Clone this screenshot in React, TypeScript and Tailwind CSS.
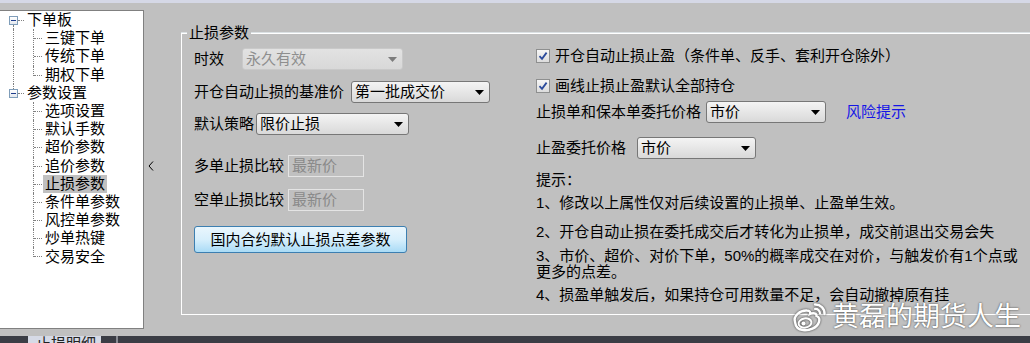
import React from 'react';

type TreeNode = { label: string; level: 0 | 1; selected?: boolean };

const nodes: TreeNode[] = [
  { label: '下单板', level: 0 },
  { label: '三键下单', level: 1 },
  { label: '传统下单', level: 1 },
  { label: '期权下单', level: 1 },
  { label: '参数设置', level: 0 },
  { label: '选项设置', level: 1 },
  { label: '默认手数', level: 1 },
  { label: '超价参数', level: 1 },
  { label: '追价参数', level: 1 },
  { label: '止损参数', level: 1, selected: true },
  { label: '条件单参数', level: 1 },
  { label: '风控单参数', level: 1 },
  { label: '炒单热键', level: 1 },
  { label: '交易安全', level: 1 },
];

function Tree() {
  return (
    <div className="mt-[7px] w-[144px] h-[319px] shrink-0 bg-white border-t border-r border-b border-[#808080] pt-0">
      {nodes.map((n, i) => {
        const isLastChild = i === 3 || i === 13;
        return (
          <div key={n.label} className="relative h-[18.2px] flex items-center">
            {/* root connector between the two roots */}
            {i === 0 && <span className="absolute left-[13px] top-[14px] bottom-0 border-l border-dotted border-[#808080]" />}
            {i >= 1 && i <= 3 && <span className="absolute left-[13px] top-0 bottom-0 border-l border-dotted border-[#808080]" />}
            {i === 4 && <span className="absolute left-[13px] top-0 h-[5px] border-l border-dotted border-[#808080]" />}

            {n.level === 0 ? (
              <>
                <span className="absolute left-[9px] top-[5px] w-[9px] h-[9px] border border-[#7f9db9] bg-linear-to-b from-white to-[#e4e8ee] flex items-center justify-center">
                  <span className="w-[5px] h-px bg-[#1d3c8c]" />
                </span>
                <span className="absolute left-[18px] top-[9px] w-[6px] border-t border-dotted border-[#808080]" />
                <span className="ml-[25px] px-[2px] leading-[18px]">{n.label}</span>
              </>
            ) : (
              <>
                <span
                  className={
                    isLastChild
                      ? 'absolute left-[33px] top-0 h-[10px] border-l border-dotted border-[#808080]'
                      : 'absolute left-[33px] top-0 bottom-0 border-l border-dotted border-[#808080]'
                  }
                />
                <span className="absolute left-[34px] top-[9px] w-[8px] border-t border-dotted border-[#808080]" />
                <span className={n.selected ? 'ml-[43px] px-[2px] leading-[18px] bg-[#c0c0c0]' : 'ml-[43px] px-[2px] leading-[18px]'}>
                  {n.label}
                </span>
              </>
            )}
          </div>
        );
      })}
    </div>
  );
}

function Combo({ w, text, disabled }: { w: string; text: string; disabled?: boolean }) {
  return (
    <div
      className={`${w} h-[22px] relative flex items-center rounded-[3px] border pl-[3px] ${
        disabled
          ? 'border-[#c9c9c9] bg-linear-to-b from-[#e2e2e2] to-[#d8d8d8] text-[#8e8e8e]'
          : 'border-[#777777] bg-linear-to-b from-[#f4f4f4] to-[#d9d9d9] text-black'
      }`}
    >
      <span className="leading-[18px] whitespace-nowrap">{text}</span>
      <svg className="absolute right-[5px] top-[8px]" width="9" height="5" viewBox="0 0 9 5">
        <path d="M0 0h9L4.5 5z" fill={disabled ? '#7c7c7c' : '#000'} />
      </svg>
    </div>
  );
}

function TextBox({ text }: { text: string }) {
  return (
    <div className="w-[76px] h-[22px] flex items-center border border-[#e4e4e4] pl-[3px] text-[#8a8a8a]">
      <span className="leading-[18px]">{text}</span>
    </div>
  );
}

function Check({ label }: { label: string }) {
  return (
    <div className="flex items-center h-[18px]">
      <span className="w-[14px] h-[14px] mr-[5px] border border-[#8e8f8f] bg-linear-to-b from-[#f6f6f6] to-[#dcdcdc] flex items-center justify-center">
        <svg width="10" height="10" viewBox="0 0 10 10">
          <path d="M1.5 5.2 L4 7.8 L8.6 1.6" fill="none" stroke="#2c4b9c" strokeWidth="1.8" />
        </svg>
      </span>
      <span className="leading-[18px] whitespace-nowrap">{label}</span>
    </div>
  );
}

function Watermark() {
  return (
    <div className="absolute left-[790px] top-[301px] flex items-center">
      <svg width="38" height="32" viewBox="0 0 38 32" className="[filter:drop-shadow(0_0_1px_rgba(0,0,0,0.7))]">
        <path
          d="M5 21 C3 15 10 9 17 9.5 C20 9.5 20.5 11.5 20 13 C23 11.5 27 12 26.5 15 C29 16 30 18 29 21 C27 27 19 30 13 29 C8 28.5 5.5 25 5 21 Z"
          fill="none"
          stroke="white"
          strokeWidth="2.4"
        />
        <ellipse cx="15" cy="22" rx="6.5" ry="4.6" fill="none" stroke="white" strokeWidth="2" transform="rotate(-10 15 22)" />
        <circle cx="13.5" cy="22.5" r="2" fill="white" />
        <path d="M25 3.5 A9 9 0 0 1 34.5 13" fill="none" stroke="white" strokeWidth="2.4" strokeLinecap="round" />
        <path d="M25 8 A4.5 4.5 0 0 1 30 12.5" fill="none" stroke="white" strokeWidth="2.2" strokeLinecap="round" />
      </svg>
      <span className="ml-[4px] text-[27px] leading-[32px] text-white whitespace-nowrap [text-shadow:0_0_2px_rgba(0,0,0,0.75)]">
        黄磊的期货人生
      </span>
    </div>
  );
}

export default function App() {
  return (
    <div className="relative w-[1030px] h-[343px] overflow-hidden flex flex-col bg-[#c0c0c0] text-black text-[15px] font-['Liberation_Sans','Noto_Sans_CJK_SC',sans-serif]">
      <div className="h-[3px] bg-[#d5d8e6]" />

      <div className="flex h-[333px]">
        <Tree />

        <div className="w-[37px] shrink-0 pt-[158px] pl-[4px]">
          <svg width="6" height="10" viewBox="0 0 6 10">
            <path d="M5 0.5 L1 5 L5 9.5" fill="none" stroke="#000" strokeWidth="1" />
          </svg>
        </div>

        <div className="relative flex-1 mt-[30px] h-[282px] border-l border-t border-b border-white shadow-[0_-1px_0_#dbe1e4]">
          <span className="absolute left-[5px] top-[-10px] px-[2px] bg-[#c0c0c0] leading-[18px]">止损参数</span>

          <div className="flex pl-[12px]">
            <div className="w-[342px] shrink-0 flex flex-col pt-[14px]">
              <div className="flex items-center h-[22px]">
                <span className="w-[48px] leading-[18px]">时效</span>
                <Combo w="w-[161px]" text="永久有效" disabled />
              </div>
              <div className="flex items-center h-[22px] mt-[11px]">
                <span className="w-[157px] leading-[18px] whitespace-nowrap">开仓自动止损的基准价</span>
                <Combo w="w-[139px]" text="第一批成交价" />
              </div>
              <div className="flex items-center h-[22px] mt-[10px]">
                <span className="w-[62px] leading-[18px] whitespace-nowrap">默认策略</span>
                <Combo w="w-[153px]" text="限价止损" />
              </div>
              <div className="flex items-center h-[22px] mt-[20px]">
                <span className="w-[94px] leading-[18px] whitespace-nowrap">多单止损比较</span>
                <TextBox text="最新价" />
              </div>
              <div className="flex items-center h-[22px] mt-[12px]">
                <span className="w-[94px] leading-[18px] whitespace-nowrap">空单止损比较</span>
                <TextBox text="最新价" />
              </div>
              <button className="mt-[15px] w-[213px] h-[27px] rounded-[3px] border border-[#3c7fb1] bg-linear-to-b from-[#eaf6fd] via-[#d7effc] to-[#a9dbf6] flex items-center justify-center leading-[18px]">
                国内合约默认止损点差参数
              </button>
            </div>

            <div className="flex flex-col pt-[13px]">
              <Check label="开仓自动止损止盈（条件单、反手、套利开仓除外）" />
              <div className="mt-[12px]">
                <Check label="画线止损止盈默认全部持仓" />
              </div>
              <div className="flex items-center h-[22px] mt-[6px]">
                <span className="w-[170px] leading-[18px] whitespace-nowrap">止损单和保本单委托价格</span>
                <Combo w="w-[120px]" text="市价" />
                <span className="ml-[20px] leading-[18px] text-[#1515e6] whitespace-nowrap">风险提示</span>
              </div>
              <div className="flex items-center h-[22px] mt-[14px]">
                <span className="w-[101px] leading-[18px] whitespace-nowrap">止盈委托价格</span>
                <Combo w="w-[119px]" text="市价" />
              </div>
              <p className="mt-[12px] leading-[18px]">提示：</p>
              <p className="mt-[5px] leading-[18px] whitespace-nowrap">1、修改以上属性仅对后续设置的止损单、止盈单生效。</p>
              <p className="mt-[11px] leading-[18px] whitespace-nowrap">2、开仓自动止损在委托成交后才转化为止损单，成交前退出交易会失</p>
              <p className="mt-[7px] leading-[16px] whitespace-nowrap">
                3、市价、超价、对价下单，50%的概率成交在对价，与触发价有1个点或
                <br />
                更多的点差。
              </p>
              <p className="mt-[6px] leading-[18px] whitespace-nowrap">4、损盈单触发后，如果持仓可用数量不足，会自动撤掉原有挂</p>
            </div>
          </div>
        </div>
      </div>

      <div className="h-[7px] flex flex-col">
        <div className="h-[2px] bg-[#d9dce6]" />
        <div className="flex-1 flex bg-[#3b3d45]">
          <div className="ml-[28px] w-[73px] bg-[#d6dae6] overflow-hidden pl-[8px] text-[15px] leading-[15px] text-[#222] whitespace-nowrap">
            止损明细 组
          </div>
          <div className="ml-[15px] w-[2px] bg-[#8a8c94]" />
        </div>
      </div>

      <Watermark />
    </div>
  );
}
